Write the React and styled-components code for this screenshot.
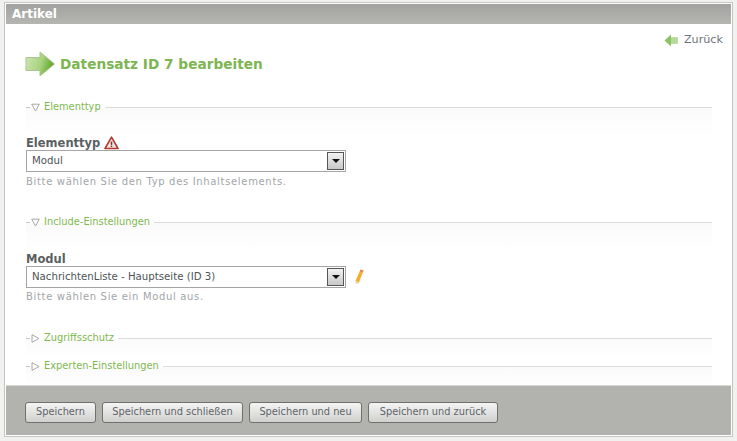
import React from "react";
import styled, { createGlobalStyle } from "styled-components";

const Global = createGlobalStyle`
  html, body { margin: 0; padding: 0; }
  body { width: 737px; height: 441px; overflow: hidden; background: #f1f1ef; font-family: "DejaVu Sans", Verdana, sans-serif; }
`;
const Page = styled.div`
  width: 737px; height: 441px; box-sizing: border-box; padding: 2px 4px 4px 4px;
`;
const Panel = styled.div`
  height: 100%; box-sizing: border-box; border: 1px solid #c4c4c2; padding: 1px; background: #fff;
  display: flex; flex-direction: column;
`;
const Header = styled.div`
  height: 20px; flex: none; box-sizing: border-box; padding: 2px 6px 0; color: #fff; font: bold 12px/16px "DejaVu Sans", sans-serif;
  background: linear-gradient(#a2a3a0, #b5b6b2);
`;
const Content = styled.div`
  flex: 1; min-height: 0; padding: 0 19px 0 20px;
  display: flex; flex-direction: column; background: #fff;
`;
const BackRow = styled.div`
  display: flex; justify-content: flex-end; align-items: center; gap: 6px; height: 16px; margin: 8px -11px 0 0;
  color: #6d7478; font: 11.2px/16px "DejaVu Sans", sans-serif;
`;
const TitleRow = styled.div`
  display: flex; align-items: center; gap: 5px; height: 26px; margin: 3px 0 0 -1px;
`;
const Title = styled.h1`
  margin: 0; color: #7db552; font: bold 13.7px/26px "DejaVu Sans", sans-serif;
`;
const Section = styled.section`
  margin-top: ${p => p.$top}px;
`;
const Legend = styled.div`
  display: flex; align-items: center; height: 16px; color: #80b84f; font: 9.85px/16px "DejaVu Sans", sans-serif;
  &::after { content: ""; flex: 1; height: 1px; background: #dcdcdc; margin-left: 4px; }
`;
const Dash = styled.span`
  width: 4px; height: 1px; background: #c8c8c8; flex: none; margin-right: 1px;
`;
const Toggle = styled.svg`
  width: 9px; height: 9px; flex: none; margin-right: 4px;
`;
const Fade = styled.div`
  height: ${p => p.$h}px; margin-top: -7px;
  background: linear-gradient(#fafafa, #fff);
`;
const Label = styled.div`
  display: flex; align-items: center; gap: 4px; height: 14px; color: #5a5f62; font: bold 11.5px/14px "DejaVu Sans", sans-serif;
`;
const SelectRow = styled.div`
  display: flex; align-items: center; gap: 9px;
`;
const Select = styled.div`
  width: 320px; height: 22px; box-sizing: border-box; border: 1px solid #a5a5a5; background: #fff;
  display: flex; align-items: center; justify-content: space-between; padding: 0 1px 0 5px;
  color: #4d5356; font: 10.2px/18px "DejaVu Sans", sans-serif;
`;
const Arrow = styled.span`
  width: 17px; height: 18px; box-sizing: border-box; border: 1px solid #555;
  background: linear-gradient(#f2f2f2, #c8c8c8); display: flex; align-items: center; justify-content: center;
  &::before { content: ""; border: 4px solid transparent; border-top: 4px solid #111; border-bottom: 0; }
`;
const Hint = styled.div`
  margin-top: ${p => p.$top}px; height: 15px; color: #a2a5a7; font: 10px/15px "DejaVu Sans", sans-serif; letter-spacing: 0.67px;
`;
const Footer = styled.div`
  flex: none; height: 50px; box-sizing: border-box; border-top: 1px solid #d8d8d6; background: #b2b3af;
  display: flex; align-items: center; gap: 6px; padding: 3px 0 0 19px;
`;
const Button = styled.button`
  height: 21px; box-sizing: border-box; padding: 0; width: ${p => p.$w}px; border: 1px solid #6f716d; border-radius: 3px;
  background: linear-gradient(#f4f4f4, #d0d0ce); color: #5d6468; font: 9.8px/18px "DejaVu Sans", sans-serif;
`;

const ArrowBig = () => (
  <svg width="30" height="26" viewBox="0 0 30 26">
    <defs>
      <linearGradient id="ag" x1="0" x2="1" y1="0" y2="0.25">
        <stop offset="0" stopColor="#cfe6b4" />
        <stop offset="0.6" stopColor="#a8d27f" />
        <stop offset="1" stopColor="#63a82a" />
      </linearGradient>
    </defs>
    <path d="M1 6.5H15V1L29.5 13 15 25V19.5H1Z" fill="url(#ag)" stroke="#a9c78d" strokeWidth="1" />
  </svg>
);
const ArrowBack = () => (
  <svg width="14" height="13" viewBox="0 0 14 13">
    <path d="M0.5 6.5L7 0.5V3.5H13.5V9.5H7V12.5Z" fill="#8cc463" />
    <path d="M7 3.5H13.5V9.5H7Z" fill="#b5d99a" />
  </svg>
);
const Down = () => (
  <Toggle viewBox="0 0 9 9"><path d="M.7 1.2H8.3L4.5 8Z" fill="#fff" stroke="#a8a8a8" /></Toggle>
);
const Right = () => (
  <Toggle viewBox="0 0 9 9"><path d="M1 .7V8.3L8 4.5Z" fill="#fff" stroke="#a8a8a8" /></Toggle>
);
const Warn = () => (
  <svg width="15" height="14" viewBox="0 0 15 14">
    <path d="M7.5 1.2L14 12.5H1Z" fill="#f6e4e0" stroke="#b23a34" strokeWidth="1.6" strokeLinejoin="round" />
    <text x="7.5" y="11" textAnchor="middle" fontSize="7.5" fontWeight="700" fontFamily="DejaVu Sans" fill="#5a2a28">!</text>
  </svg>
);
const Pencil = () => (
  <svg width="9" height="16" viewBox="0 0 9 16">
    <path d="M5.5 0.5L8.5 1.5 4 13.5 1 15 0.7 11.5Z" fill="#f2ae2e" />
    <path d="M5.5 0.5L8.5 1.5 7.8 3.4 4.8 2.4Z" fill="#e8875a" />
    <path d="M0.7 11.5L4 13.5 1 15Z" fill="#e9d9b5" />
  </svg>
);

const Head = ({ open, children }) => (
  <Legend><Dash />{open ? <Down /> : <Right />}{children}</Legend>
);

export default function App() {
  return (
    <Page>
      <Global />
      <Panel>
        <Header>Artikel</Header>
        <Content>
          <BackRow><ArrowBack />Zurück</BackRow>
          <TitleRow><ArrowBig /><Title>Datensatz ID 7 bearbeiten</Title></TitleRow>
          <Section $top={22}>
            <Head open>Elementtyp</Head>
            <Fade $h={28} />
            <Label>Elementtyp <Warn /></Label>
            <SelectRow><Select>Modul<Arrow /></Select></SelectRow>
            <Hint $top={2}>Bitte wählen Sie den Typ des Inhaltselements.</Hint>
          </Section>
          <Section $top={25}>
            <Head open>Include-Einstellungen</Head>
            <Fade $h={29} />
            <Label>Modul</Label>
            <SelectRow><Select>NachrichtenListe - Hauptseite (ID 3)<Arrow /></Select><Pencil /></SelectRow>
            <Hint $top={1}>Bitte wählen Sie ein Modul aus.</Hint>
          </Section>
          <Section $top={26}>
            <Head>Zugriffsschutz</Head>
            <Fade $h={19} />
          </Section>
          <Section $top={0}>
            <Head>Experten-Einstellungen</Head>
            <Fade $h={19} />
          </Section>
        </Content>
        <Footer>
          <Button $w={71}>Speichern</Button>
          <Button $w={141}>Speichern und schließen</Button>
          <Button $w={113}>Speichern und neu</Button>
          <Button $w={130}>Speichern und zurück</Button>
        </Footer>
      </Panel>
    </Page>
  );
}
